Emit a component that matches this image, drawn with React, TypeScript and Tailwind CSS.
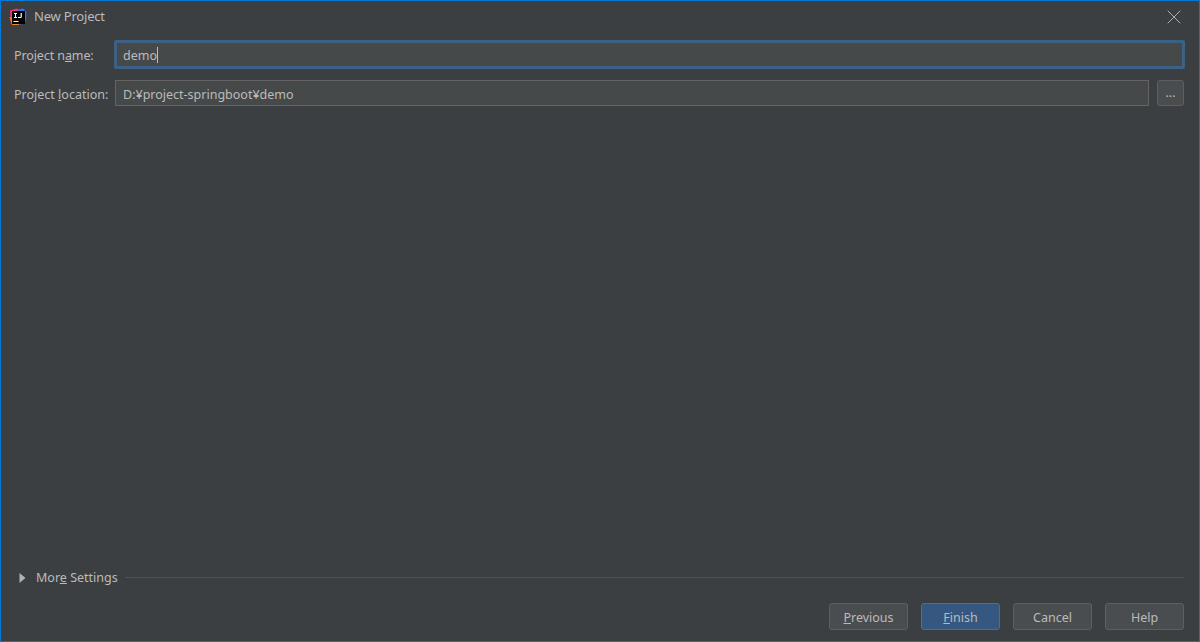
import { X } from 'lucide-react'

function Logo() {
  return (
    <svg width="18" height="18" viewBox="0 0 18 18" className="shrink-0">
      <path d="M1 2.5 L8 0.5 L10 3 L10 11 L2 16 Z" fill="#f0357f" />
      <path d="M0.5 9 L3 17 L10 17 L10 10 Z" fill="#fc801d" />
      <path d="M9 1.5 L14 0.5 L17.5 4 L17 13 L11 17 L9 11 Z" fill="#3b6ff0" />
      <rect x="3" y="3" width="13" height="13" fill="#000" />
      <rect x="4.5" y="13" width="5" height="1" fill="#fff" />
      <path d="M5 5 H8 V6 H7 V9 H8 V10 H5 V9 H6 V6 H5 Z" fill="#fff" />
      <path d="M11.6 5 H12.8 V9 Q12.8 10 11.6 10 H9 V9 H11.6 Z" fill="#fff" />
    </svg>
  )
}

function FooterButton({ children, primary }: { children: React.ReactNode; primary?: boolean }) {
  return (
    <button
      className={
        primary
          ? 'w-[79px] h-[27px] pt-[3px] rounded-[3px] border border-[#4c708c] bg-[#365880] text-[#bbbbbb]'
          : 'w-[79px] h-[27px] pt-[3px] rounded-[3px] border border-[#5e6060] bg-[#4a4d4f] text-[#bbbbbb]'
      }
    >
      {children}
    </button>
  )
}

export default function App() {
  return (
    <div className="h-[642px] w-[1200px] overflow-hidden bg-[#3c3f41] border border-[#0078d7] flex flex-col text-[12.5px] text-[#bbbbbb] font-['Noto_Sans','Open_Sans',sans-serif]">
      <div className="h-[31px] shrink-0 flex items-center pl-[8px] pr-[19px]">
        <Logo />
        <span className="ml-[7px] flex-1 text-[13px] tracking-[-0.2px] pt-px">New Project</span>
        <X size={24} strokeWidth={0.9} className="text-[#bcbcbc] -mr-[6px]" />
      </div>

      <div className="flex flex-col gap-[11px] pl-[13px] pr-[15px] pt-[8px]">
        <div className="flex items-center h-[29px] -mr-px">
          <label className="w-[100px] shrink-0 pt-[3px] tracking-[-0.1px]">
            Project n<u>a</u>me:
          </label>
          <div className="flex-1 h-[29px] rounded-[2px] border-[3px] border-[#3d6185] bg-[#45494a] flex items-center pl-[6px] pt-[3px]">
            <span>demo</span>
            <span className="w-px h-[16px] -mt-[3px] bg-[#bbbbbb]" />
          </div>
        </div>
        <div className="flex items-center h-[26px]">
          <label className="w-[101px] shrink-0 pt-[5px]">
            Project <u>l</u>ocation:
          </label>
          <div className="flex-1 h-[26px] border border-[#646464] bg-[#45494a] flex items-center pl-[7px] pt-[5px]">
            D:¥project-springboot¥demo
          </div>
          <button className="ml-[8px] w-[27px] h-[26px] rounded-[3px] border border-[#5e6060] bg-[#4a4d4f] leading-[20px]">
            ...
          </button>
        </div>
      </div>

      <div className="flex-1" />

      <div className="flex items-center pl-[18px] pr-[15px] h-[20px]">
        <svg width="7" height="10" viewBox="0 0 7 10" className="shrink-0">
          <path d="M0.5 0 L6.5 5 L0.5 10 Z" fill="#afb1b3" />
        </svg>
        <span className="ml-[10px]">
          Mor<u>e</u> Settings
        </span>
        <div className="ml-[7px] flex-1 h-px bg-[#515151] -mt-[1px]" />
      </div>

      <div className="flex justify-end gap-[13px] pr-[15px] pt-[15px] pb-[11px]">
        <FooterButton>
          <u>P</u>revious
        </FooterButton>
        <FooterButton primary>
          <u>F</u>inish
        </FooterButton>
        <FooterButton>Cancel</FooterButton>
        <FooterButton>Help</FooterButton>
      </div>
    </div>
  )
}
